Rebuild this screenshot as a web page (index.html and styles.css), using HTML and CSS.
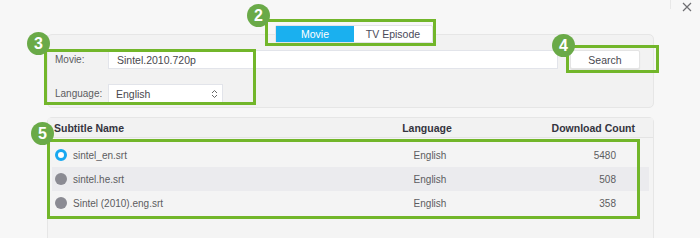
FILE: index.html
```html
<!DOCTYPE html>
<html>
<head>
<meta charset="utf-8">
<link rel="stylesheet" href="styles.css">
</head>
<body>
<div class="screen">
  <div class="topline"></div>
  <div class="close">
    <svg width="10" height="10" viewBox="0 0 10 10"><path d="M1 1L9 9M9 1L1 9" stroke="#6e6e72" stroke-width="1.2" fill="none"/></svg>
  </div>

  <div class="page">
    <div class="tabs">
      <div class="tab active">Movie</div>
      <div class="tab">TV Episode</div>
    </div>

    <div class="card search-card">
      <div class="form-row">
        <span class="label">Movie:</span>
        <div class="input">Sintel.2010.720p</div>
        <button class="btn">Search</button>
      </div>
      <div class="form-row">
        <span class="label">Language:</span>
        <div class="select">
          <span>English</span>
          <svg class="updown" width="7" height="10" viewBox="0 0 7 10"><path d="M1 4L3.5 1.5L6 4M1 6L3.5 8.5L6 6" stroke="#666" stroke-width="1" fill="none"/></svg>
        </div>
      </div>
    </div>

    <div class="card list-card">
      <div class="thead">
        <div class="c-name">Subtitle Name</div>
        <div class="c-lang">Language</div>
        <div class="c-count">Download Count</div>
      </div>
      <div class="rows">
        <div class="row">
          <div class="c-name"><span class="radio on"></span>sintel_en.srt</div>
          <div class="c-lang">English</div>
          <div class="c-count">5480</div>
        </div>
        <div class="row alt">
          <div class="c-name"><span class="radio"></span>sintel.he.srt</div>
          <div class="c-lang">English</div>
          <div class="c-count">508</div>
        </div>
        <div class="row">
          <div class="c-name"><span class="radio"></span>Sintel (2010).eng.srt</div>
          <div class="c-lang">English</div>
          <div class="c-count">358</div>
        </div>
      </div>
    </div>
  </div>

  <div class="hl hl-tabs"></div>
  <div class="hl hl-form"></div>
  <div class="hl hl-search"></div>
  <div class="hl hl-rows"></div>
  <div class="badge b2">2</div>
  <div class="badge b3">3</div>
  <div class="badge b4">4</div>
  <div class="badge b5">5</div>
</div>
</body>
</html>
```

FILE: styles.css
```css
* { box-sizing: border-box; }
html, body { margin: 0; padding: 0; }
body {
  background: #f7f7f7;
  font-family: "Liberation Sans", Arial, sans-serif;
  font-size: 10px;
  color: #5c5c60;
}
.screen {
  position: relative;
  width: 700px;
  height: 238px;
  overflow: hidden;
}
.topline {
  position: absolute;
  left: 670px; top: 0;
  width: 1px; height: 9px;
  background: #e8e8e8;
}
.close {
  position: absolute;
  left: 682px; top: 2px;
  width: 10px; height: 10px;
  display: flex;
}
.page {
  padding: 0 46px 0 47px;
}
.tabs {
  position: relative;
  z-index: 1;
  display: flex;
  margin: 25px 0 -9px 228px;
  width: 158px;
  height: 18px;
  background: #fff;
  border: 1px solid #e3e3e6;
  border-radius: 2px;
  font-size: 10.5px;
}
.tab {
  width: 80px;
  display: flex;
  align-items: center;
  justify-content: center;
  color: #4a4a5a;
}
.tab.active {
  background: #1ab0ef;
  color: #fff;
}
.card {
  background: #f2f2f2;
  border: 1px solid #e6e6e6;
  border-radius: 5px;
}
.search-card {
  height: 74px;
  padding: 15px 12px 0 7px;
  display: flex;
  flex-direction: column;
  gap: 15px;
}
.form-row {
  display: flex;
  align-items: center;
  height: 19px;
}
.label {
  width: 53px;
}
.input {
  width: 450px;
  height: 19px;
  background: #fff;
  border: 1px solid #e2e4ea;
  padding-left: 8px;
  display: flex;
  align-items: center;
  color: #48484e;
  font-size: 10.5px;
}
.btn {
  margin-left: 12px;
  width: 70px;
  height: 19px;
  background: #fff;
  border: 1px solid #e4e4e4;
  border-radius: 2px;
  box-shadow: 0 1px 1px rgba(0,0,0,0.08);
  font-family: inherit;
  font-size: 10.5px;
  color: #48484e;
  padding: 0;
}
.select {
  width: 115px;
  height: 19px;
  background: #fff;
  border: 1px solid #e2e4ea;
  padding: 0 4px 0 7px;
  display: flex;
  align-items: center;
  justify-content: space-between;
  color: #48484e;
  font-size: 10.5px;
}
.list-card {
  margin-top: 9px;
  height: 140px;
  border-radius: 5px 5px 0 0;
  background: #f4f4f4;
  padding: 0 4px;
}
.thead, .row {
  display: grid;
  grid-template-columns: 328px 100px 1fr;
  align-items: center;
}
.thead {
  height: 20px;
  font-weight: bold;
  font-size: 10.5px;
  color: #34343e;
  border-bottom: 1px solid #e4e4e4;
  background: #f2f2f2;
  margin: 0 -4px;
  padding: 0 4px;
}
.thead .c-name { padding-left: 2px; }
.thead .c-lang { text-align: center; padding-right: 6px; }
.thead .c-count { text-align: right; padding-right: 14px; }
.rows { padding-top: 5px; }
.row {
  height: 24px;
}
.row.alt { background: #ebebee; }
.row .c-name {
  display: flex;
  align-items: center;
  padding-left: 3px;
}
.row .c-lang { text-align: center; }
.row .c-count { text-align: right; padding-right: 33px; }
.radio {
  width: 12px; height: 12px;
  border-radius: 50%;
  background: #8b8b93;
  margin-right: 6px;
  flex: none;
}
.radio.on {
  background: #fff;
  border: 3px solid #18a8f0;
}
.hl {
  position: absolute;
  border: 3px solid #72b62a;
  pointer-events: none;
}
.hl-tabs { left: 265px; top: 19px; width: 171px; height: 27px; }
.hl-form { left: 44px; top: 49px; width: 212px; height: 56px; }
.hl-search { left: 566px; top: 45px; width: 93px; height: 28px; }
.hl-rows { left: 47px; top: 139px; width: 593px; height: 80px; }
.badge {
  position: absolute;
  width: 23px; height: 23px;
  border-radius: 50%;
  background: #6aaa48;
  color: #fff;
  font-weight: bold;
  font-size: 16px;
  display: flex;
  align-items: center;
  justify-content: center;
}
.b2 { left: 247px; top: 4px; }
.b3 { left: 27px; top: 32px; }
.b4 { left: 552px; top: 34px; }
.b5 { left: 31px; top: 122px; }
```
